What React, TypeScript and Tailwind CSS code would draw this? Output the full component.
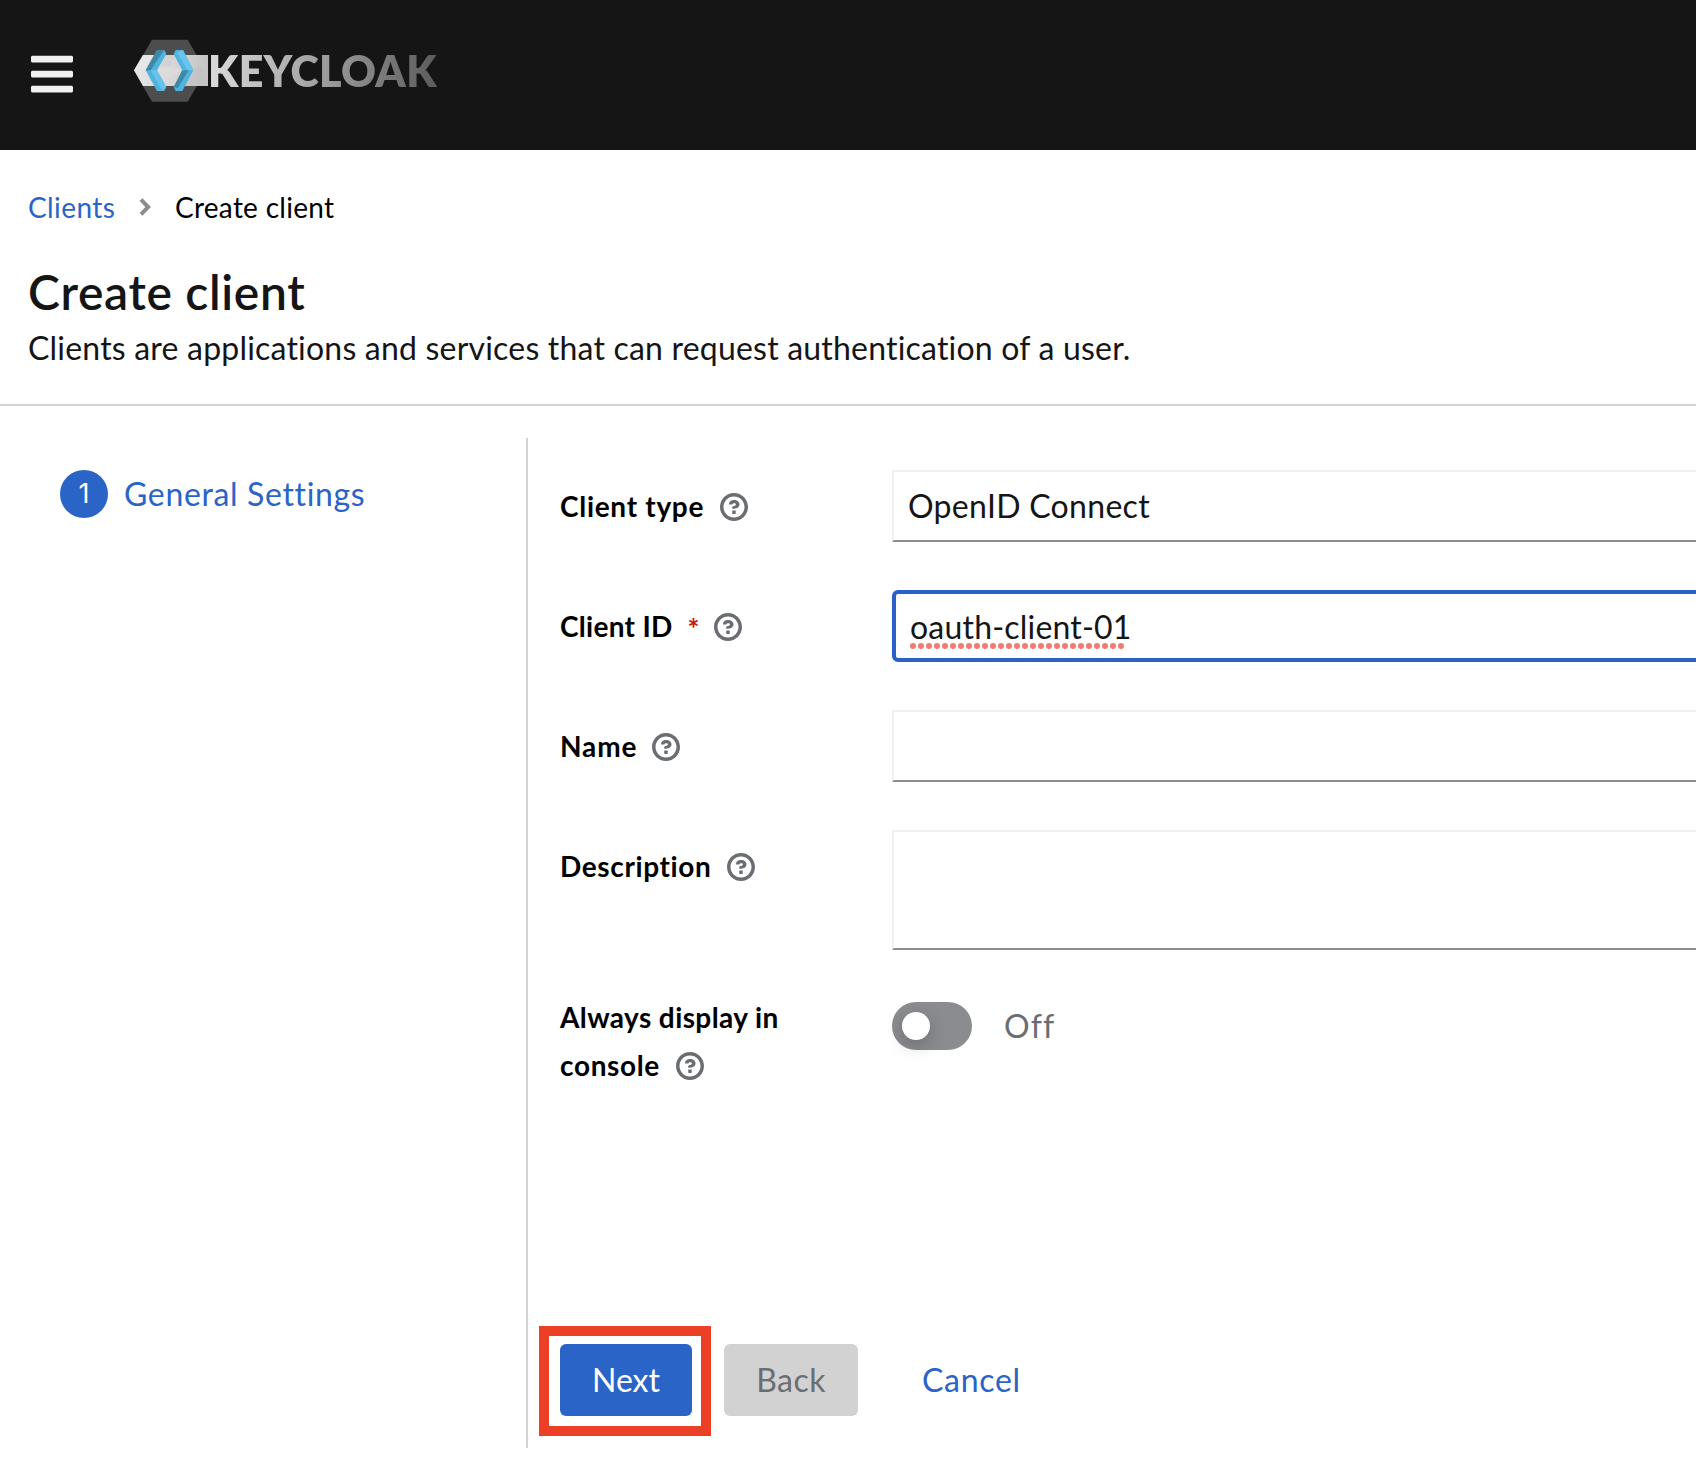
import React from "react";
import { FaBars } from "react-icons/fa";

function HelpIcon({ className = "" }: { className?: string }) {
  return (
    <svg viewBox="0 0 1024 1024" className={`h-7 w-7 shrink-0 fill-[#6a6e73] ${className}`} aria-label="Help">
      <path d="M521.3,576 C627.5,576 713.7,502 713.7,413.7 C713.7,325.4 627.6,253.6 521.3,253.6 C366,253.6 334.5,337.7 329.2,407.2 C329.2,414.3 335.2,416 343.5,416 L445,416 C450.5,416 458,415.5 460.8,406.5 C460.8,362.6 582.9,357.1 582.9,413.6 C582.9,441.9 556.2,470.9 521.3,473 C486.4,475.1 447.3,479.8 447.3,521.7 L447.3,553.8 C447.3,570.8 456.1,576 472,576 Z M575.3,751.3 L575.3,655.3 C575.3,651 573.6,647 570.6,644 C567.6,641 563.5,639.3 559.3,639.3 L463.3,639.3 C459,639.3 455,641 452,644 C449,647 447.3,651 447.3,655.3 L447.3,751.3 C447.3,755.5 449,759.6 452,762.6 C455,765.6 459,767.3 463.3,767.3 L559.3,767.3 C563.5,767.3 567.6,765.6 570.6,762.6 C573.6,759.6 575.3,755.5 575.3,751.3 Z M512,896 C300.2,896 128,723.9 128,512 C128,300.3 300.2,128 512,128 C723.8,128 896,300.2 896,512 C896,723.8 723.7,896 512,896 M512.1,0 C229.7,0 0,229.8 0,512 C0,794.2 229.8,1024 512.1,1024 C794.4,1024 1024,794.3 1024,512 C1024,229.7 794.4,0 512.1,0 Z" />
    </svg>
  );
}

function LogoMark() {
  return (
    <svg viewBox="0 0 234 210" className="h-[70px] w-[78px] shrink-0">
      <defs>
        <linearGradient id="band" x1="0" x2="1" y1="0" y2="0">
          <stop offset="0" stopColor="#e6e6e6" />
          <stop offset="0.55" stopColor="#d6d6d6" />
          <stop offset="1" stopColor="#c4c4c4" />
        </linearGradient>
      </defs>
      <polygon points="66,11 173,11 227,104 173,197 66,197 12,104" fill="#4d4d4d" />
      <polygon points="39,57 234,57 234,150 39,150 12,103" fill="url(#band)" />
      <polygon points="39,57 70,57 47,103 12,103" fill="#e9e9e9" opacity="0.6" />
      <polygon points="109,57 135,57 120,90 90,92" fill="#cfcfcf" opacity="0.6" />
      <polygon points="190,103 210,85 234,150 166,150" fill="#bfbfbf" opacity="0.6" />
      <polygon points="83,103 125,90 157,103 120,125" fill="#dedede" opacity="0.6" />
      <polygon points="81,42 103,42 109,54 81,103 109,153 103,165 81,165 47,103" fill="#4fb3e0" />
      <polygon points="81,42 103,42 97,50 62,103 47,103" fill="#3f88a8" />
      <polygon points="62,103 81,103 109,153 97,165" fill="#68c4ea" />
      <polygon points="137,42 159,42 190,103 157,165 137,165 131,153 157,103 131,54" fill="#4fb3e0" />
      <polygon points="141,50 159,42 190,103 172,103" fill="#68c4ea" />
      <polygon points="157,103 176,103 143,157 131,153" fill="#3f88a8" />
    </svg>
  );
}

const control = "flex w-[1000px] shrink-0 border-2 border-[#f0f0f0] border-b-[#8a8d90] bg-white";
const label = "flex w-[332px] shrink-0 items-center text-[28px] font-bold leading-[48px] text-black";

export default function App() {
  return (
    <div className="flex h-[1462px] w-[1696px] flex-col overflow-hidden bg-white font-['Lato','Liberation_Sans',sans-serif] text-[#151515]">
      <header className="flex h-[150px] shrink-0 items-start bg-[#151515]">
        <button className="ml-[31px] mt-[50px] text-[#f0f0f0]" aria-label="Global navigation">
          <FaBars className="h-12 w-[42px]" />
        </button>
        <div className="ml-[57px] mt-9 flex">
          <LogoMark />
          <span className="mt-[9px] bg-linear-to-r from-[#dcdcdc] via-[#9e9e9e] to-[#5c5c5c] bg-clip-text text-[43px] font-extrabold leading-[52px] tracking-[0.25px] text-transparent">
            KEYCLOAK
          </span>
        </div>
      </header>

      <section className="h-[256px] shrink-0 border-b-2 border-[#d2d2d2] px-7 pt-9">
        <nav className="flex items-center text-[28px] leading-[42px]">
          <a className="w-[111px] tracking-[0.4px] text-[#2a64c7]">Clients</a>
          <svg viewBox="0 0 12 18" className="h-[18px] w-3 fill-none stroke-[#8a8d90] stroke-[4]">
            <path d="M2 1.6 9.2 9 2 16.4" />
          </svg>
          <span className="ml-6 tracking-[0.28px] text-black">Create client</span>
        </nav>
        <h1 className="mt-[34px] text-[48px] font-semibold leading-[60px] tracking-[0.65px]">Create client</h1>
        <p className="mt-0.5 text-[32px] leading-[48px] tracking-[0.2px]">
          Clients are applications and services that can request authentication of a user.
        </p>
      </section>

      <div className="mt-8 flex h-[1010px] shrink-0">
        <aside className="w-[528px] shrink-0 border-r-2 border-[#d2d2d2] pl-[60px] pt-8">
          <div className="flex h-12 items-center text-[#2a64c7]">
            <span className="flex h-12 w-12 items-center justify-center rounded-full bg-[#2a64c7] pt-px font-['Inter'] text-[27px] text-white">
              1
            </span>
            <span className="ml-4 pb-px text-[32px] leading-[45px] tracking-[0.65px]">General Settings</span>
          </div>
        </aside>

        <main className="flex flex-col pl-8 pt-8">
          <div className="flex h-[72px]">
            <div className={label}>
              <span className="tracking-[0.7px]">Client type</span>
              <HelpIcon className="ml-4 mt-0.5" />
            </div>
            <div className={`${control} h-[72px] items-center pl-3.5 text-[32px] tracking-[0.3px]`}>OpenID Connect</div>
          </div>

          <div className="mt-12 flex h-[72px]">
            <div className={label}>
              <span className="tracking-[0.29px]">Client ID</span>
              <span className="ml-[15px] mt-1 text-[#c9190b]">*</span>
              <HelpIcon className="ml-[15px] mt-0.5" />
            </div>
            <div className="flex h-[72px] w-[1000px] shrink-0 items-center rounded-md border-4 border-[#2a60c8] pl-3.5 pt-0.5 text-[32px]">
              <span className="relative tracking-[0.2px]">
                oauth-client-01
                <svg className="absolute left-0 top-10 h-1.5 w-[216px]" viewBox="0 0 216 6">
                  <path d="M3 3H212" className="fill-none stroke-[#f27b70] stroke-[6]" strokeLinecap="round" strokeDasharray="0 8" />
                </svg>
              </span>
            </div>
          </div>

          <div className="mt-12 flex h-[72px]">
            <div className={label}>
              <span className="tracking-[0.88px]">Name</span>
              <HelpIcon className="ml-[15px] mt-0.5" />
            </div>
            <div className={`${control} h-[72px]`} />
          </div>

          <div className="mt-12 flex h-[120px]">
            <div className={`${label} h-[72px]`}>
              <span className="tracking-[0.63px]">Description</span>
              <HelpIcon className="ml-4 mt-0.5" />
            </div>
            <div className={`${control} h-[120px]`} />
          </div>

          <div className="mt-[43px] flex h-24">
            <div className="w-[332px] shrink-0 text-[28px] font-bold leading-[48px] text-black">
              <div className="tracking-[0.4px]">Always display in</div>
              <div className="flex items-center">
                <span className="tracking-[0.65px]">console</span>
                <HelpIcon className="ml-4 mt-0.5" />
              </div>
            </div>
            <div className="mt-[9px] flex h-12 items-center">
              <span className="flex h-12 w-20 items-center rounded-full bg-[#8b8c90] pl-2.5">
                <span className="h-7 w-7 rounded-full bg-white shadow-[0_6px_18px_rgba(3,3,3,0.22)]" />
              </span>
              <span className="ml-8 pb-0.5 text-[32px] leading-[45px] tracking-[1.2px] text-[#6a6e73]">Off</span>
            </div>
          </div>

          <div className="mt-[255px] flex h-[72px] items-center text-[32px]">
            <button className="relative flex h-[72px] w-[132px] items-center justify-center rounded-md bg-[#2a64c7] pb-px text-white">
              Next
              <span className="absolute -left-[21px] -top-[18px] h-[110px] w-[172px] border-[10px] border-[#eb4025]" />
            </button>
            <button className="ml-8 flex h-[72px] w-[134px] items-center justify-center rounded-md bg-[#d2d2d2] pb-px tracking-[0.46px] text-[#6a6e73]">
              Back
            </button>
            <button className="ml-16 pb-px tracking-[0.7px] text-[#2a64c7]">Cancel</button>
          </div>
        </main>
      </div>
    </div>
  );
}
